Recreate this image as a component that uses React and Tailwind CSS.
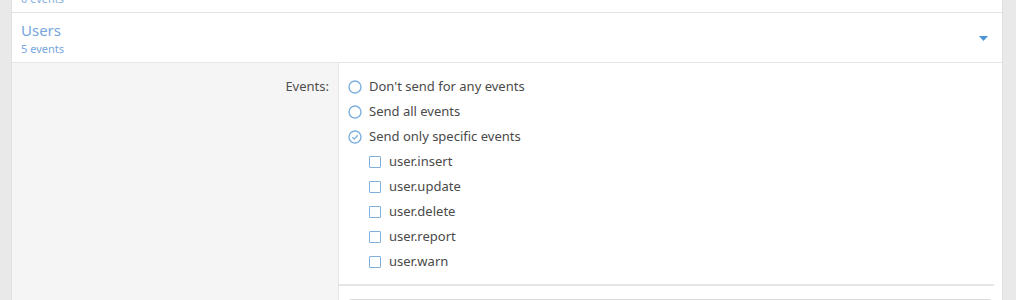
import React from "react";

const EVENTS = ["user.insert", "user.update", "user.delete", "user.report", "user.warn"];

function Radio({ checked }) {
  return (
    <svg width="14" height="14" viewBox="0 0 14 14" className="shrink-0">
      <circle cx="7" cy="7" r="6" fill="none" stroke="#7fb0de" strokeWidth="1.4" />
      {checked && <path d="M4.3 7.1 L6.2 9 L9.8 5.2" fill="none" stroke="#7fb0de" strokeWidth="1.3" />}
    </svg>
  );
}

export default function App() {
  const font = { fontFamily: '"Noto Sans", "Open Sans", sans-serif' };
  return (
    <div className="h-[300px] overflow-hidden bg-[#e9e9e9] pl-[11px] pr-[13px]" style={font}>
      <div className="bg-white border-x border-[#e0e0e0]">
        {/* previous section, cut off */}
        <div className="h-[13px] overflow-hidden flex flex-col justify-end border-b border-[#e2e2e2] pb-[6px] pl-[9px]">
          <span className="text-[11px] leading-[14px] text-[#86b1e0]">0 events</span>
        </div>

        {/* Users header */}
        <div className="h-[50px] flex items-start justify-between border-b border-[#e6e6e6] pl-[9px] pr-[14px] pt-[8px]">
          <div className="flex flex-col">
            <span className="text-[15px] leading-[18px] text-[#76a6de]">Users</span>
            <span className="text-[11px] leading-[15px] mt-[2px] text-[#76a6de]">5 events</span>
          </div>
          <svg width="9" height="5" viewBox="0 0 9 5" className="mt-[15px]">
            <path d="M0 0 H9 L4.5 5 Z" fill="#4f94d8" />
          </svg>
        </div>

        {/* body */}
        <div className="flex">
          <div className="w-[327px] bg-[#f5f5f5] border-r border-[#e6e6e6] flex justify-end pr-[9px] pt-[13px]">
            <span className="text-[13px] leading-[20px] text-[#505050]">Events:</span>
          </div>
          <div className="flex-1 pr-[8px]">
            <div className="pt-[11px] pb-[10px] pl-[9px] text-[13px] text-[#4a4a4a] border-b-2 border-[#e6e6e6]">
              <div className="h-[25px] flex items-center gap-[7px]">
                <Radio />
                <span>Don't send for any events</span>
              </div>
              <div className="h-[25px] flex items-center gap-[7px]">
                <Radio />
                <span>Send all events</span>
              </div>
              <div className="h-[25px] flex items-center gap-[7px]">
                <Radio checked />
                <span>Send only specific events</span>
              </div>
              {EVENTS.map((e) => (
                <div key={e} className="h-[25px] flex items-center gap-[8px] pl-[21px]">
                  <span className="w-[12px] h-[12px] border-[1.5px] border-[#7fb0de] rounded-[1px] shrink-0" />
                  <span>{e}</span>
                </div>
              ))}
            </div>
            <div className="pt-[13px] pl-[9px] pr-[2px]">
              <div className="h-[30px] border border-[#dcdcdc] rounded-[3px]" />
            </div>
          </div>
        </div>
      </div>
    </div>
  );
}
